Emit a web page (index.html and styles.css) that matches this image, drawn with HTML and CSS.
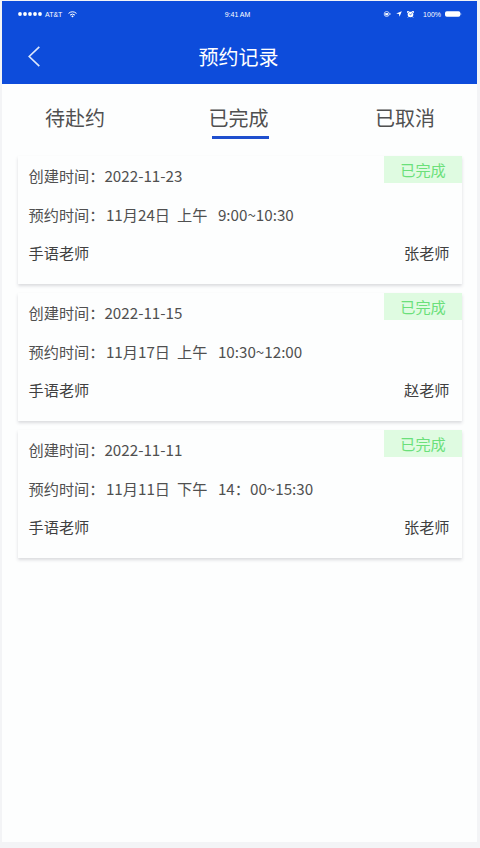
FILE: index.html
```html
<!DOCTYPE html>
<html lang="zh-CN">
<head>
    <meta charset="UTF-8">
    <meta name="viewport" content="width=device-width, initial-scale=1.0">
    <title>预约记录</title>
    <link rel="stylesheet" href="styles.css">
</head>
<body>
    <div class="phone">
        <header class="header">
            <div class="status-bar">
                <div class="status-left">
                    <svg class="signal" width="24" height="4" viewBox="0 0 24 4" fill="#fff">
                        <circle cx="2" cy="2" r="1.9"/>
                        <circle cx="7" cy="2" r="1.9"/>
                        <circle cx="12" cy="2" r="1.9"/>
                        <circle cx="17" cy="2" r="1.9"/>
                        <circle cx="22" cy="2" r="1.9"/>
                    </svg>
                    <span class="carrier">AT&amp;T</span>
                    <svg class="wifi" width="9" height="7" viewBox="0 0 9 7" fill="none" stroke="#fff">
                        <path d="M.5 2.4Q4.5-.9 8.5 2.4M2 4.1Q4.5 2 7 4.1"/>
                        <path d="M3.2 5L4.5 6.6 5.8 5Q4.5 4 3.2 5z" fill="#fff" stroke="none"/>
                    </svg>
                </div>
                <span class="clock">9:41 AM</span>
                <div class="status-right">
                    <svg width="8" height="6" viewBox="0 0 8 6" fill="none" stroke="#fff" stroke-width=".7">
                        <circle cx="3.7" cy="3" r="2.5"/>
                        <rect x="2.7" y="2.4" width="2" height="1.6" fill="#fff"/>
                        <path d="M6 3h2"/>
                    </svg>
                    <svg class="location" width="6" height="6" viewBox="0 0 6 6" fill="#fff">
                        <path d="M5.8.2L3.5 5.8 3 3.1.2 2.6z"/>
                    </svg>
                    <svg class="alarm" width="7" height="7" viewBox="0 0 7 7">
                        <circle cx="3.5" cy="3.5" r="2.8" fill="#fff"/>
                        <path d="M.3 2V.3H2.4M4.6.3H6.7V2M1.5 5.5L.8 6.6M5.5 5.5l.7 1.1" fill="#fff" stroke="#fff" stroke-width=".7"/>
                        <path d="M2.3 3l1.2 1L4.9 2.3" fill="none" stroke="#0d4cdb" stroke-width=".7"/>
                    </svg>
                    <span class="percent">100%</span>
                    <svg width="17" height="6" viewBox="0 0 17 6" fill="#fff">
                        <rect y=".3" width="15.3" height="5.4" rx="1.8"/>
                        <path d="M15.7 1.8Q17 3 15.7 4.2z"/>
                    </svg>
                </div>
            </div>
            <div class="nav-bar">
                <svg class="back" width="12" height="21" viewBox="0 0 12 21" fill="none" stroke="#dce7fc" stroke-width="1.6">
                    <path d="M11.3 .8L1.2 10.5 11.3 20.2"/>
                </svg>
                <h1>预约记录</h1>
            </div>
        </header>

        <nav class="tabs">
            <span class="tab">待赴约</span>
            <span class="tab active">已完成</span>
            <span class="tab">已取消</span>
        </nav>

        <main class="list">
            <div class="card">
                <span class="badge">已完成</span>
                <p>创建时间：2022-11-23</p>
                <p>预约时间：<span class="date">11月24日</span><span class="half">上午</span>9:00~10:30</p>
                <p class="teacher"><span>手语老师</span><span>张老师</span></p>
            </div>
            <div class="card">
                <span class="badge">已完成</span>
                <p>创建时间：2022-11-15</p>
                <p>预约时间：<span class="date">11月17日</span><span class="half">上午</span>10:30~12:00</p>
                <p class="teacher"><span>手语老师</span><span>赵老师</span></p>
            </div>
            <div class="card">
                <span class="badge">已完成</span>
                <p>创建时间：2022-11-11</p>
                <p>预约时间：<span class="date">11月11日</span><span class="half">下午</span>14：00~15:30</p>
                <p class="teacher"><span>手语老师</span><span>张老师</span></p>
            </div>
        </main>
    </div>
</body>
</html>
```
FILE: styles.css
```css
* {
    box-sizing: border-box;
}

body {
    margin: 0;
    padding: 1px 3px 6px 2px;
    height: 848px;
    background-color: #f3f4f6;
    font-family: "Noto Sans CJK SC", sans-serif;
    color: #505050;
}

.phone {
    height: 841px;
    background-color: #fdfefe;
}

.header {
    height: 83px;
    background-color: #0d4cdb;
    color: #fff;
}

.status-bar {
    display: grid;
    grid-template-columns: 1fr auto 1fr;
    align-items: center;
    height: 26px;
    padding: 0 15px 0 16px;
    font-family: "Liberation Sans", sans-serif;
    font-size: 7px;
    line-height: 8px;
}

.status-left,
.status-right {
    display: flex;
    align-items: center;
}

.status-right {
    justify-content: flex-end;
}

.carrier {
    margin: 1px 6px 0 3px;
}

.clock {
    margin: 2px 5px 0 0;
}

.location {
    margin: 0 5px;
}

.percent {
    margin: 1px 4px 0 9px;
}

.nav-bar {
    display: grid;
    grid-template-columns: 1fr auto 1fr;
    align-items: center;
    height: 57px;
    padding: 2px 28px 0 26px;
}

.nav-bar h1 {
    margin: 0;
    font-size: 20px;
    font-weight: 400;
    line-height: 30px;
}

.tabs {
    display: flex;
    justify-content: space-between;
    height: 71px;
    padding: 18px 42px 0 43px;
}

.tab {
    height: 37px;
    font-size: 20px;
    line-height: 32px;
}

.active {
    margin-right: 3px;
    background: linear-gradient(#1f4fce, #1f4fce) 3px 34px / 57px 3px no-repeat;
}

.list {
    display: flex;
    flex-direction: column;
    gap: 9px;
    padding: 1px 15px 0 16px;
}

.card {
    position: relative;
    height: 128px;
    padding: 0 12.5px 0 10.5px;
    background-color: #fdfefe;
    box-shadow: 0 2px 3px rgba(60, 60, 80, .18);
    font-size: 15.2px;
    line-height: 38.5px;
}

.card p {
    margin: 0;
}

.date {
    margin: 0 7px 0 1.5px;
}

.half {
    margin-right: 10.5px;
}

.card .teacher {
    display: flex;
    justify-content: space-between;
    color: #404040;
}

/* status label in the card corner */
.badge {
    position: absolute;
    top: 0;
    right: 0;
    width: 78px;
    height: 27px;
    background-color: #dffbe1;
    color: #6be07a;
    line-height: 26px;
    text-align: center;
}
```
